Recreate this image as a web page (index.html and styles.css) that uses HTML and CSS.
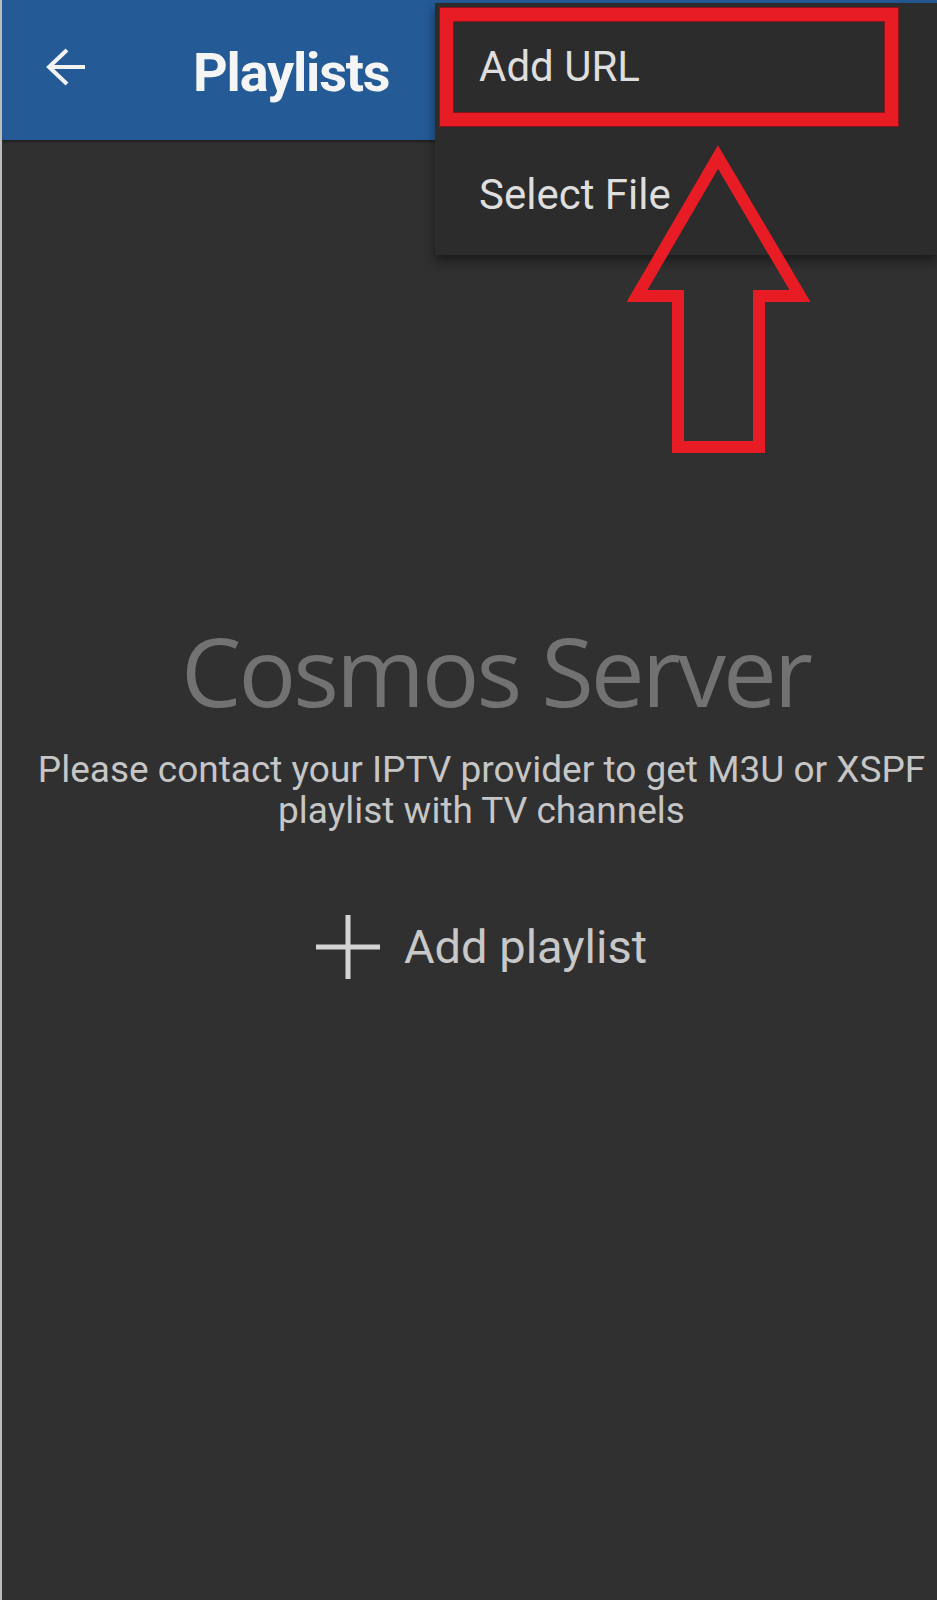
FILE: index.html
```html
<!DOCTYPE html>
<html>

<head>
	<meta http-equiv="Content-Type" content="text/html; charset=UTF-8">
	<meta name="viewport" content="width=device-width, initial-scale=1">
	<title>Playlists</title>
	<link rel="stylesheet" href="styles.css">
</head>

<body>
	<div id="screen">
		<div id="topbar">
			<svg class="back" width="41" height="40" viewBox="0 0 41 40">
				<path d="M3 20H39" />
				<path d="M21 3L3 20L21 37" />
			</svg>
			<div class="title">Playlists</div>
		</div>

		<!-- popup menu from the toolbar -->
		<div id="menu">
			<div class="menu_item marked">Add URL</div>
			<div class="menu_item">Select File</div>
		</div>

		<div id="empty">
			<div class="server">Cosmos Server</div>
			<p class="hint">Please contact your IPTV provider to get M3U or XSPF<br>playlist with TV channels</p>
			<div class="add_row">
				<svg class="plus" width="64" height="64" viewBox="0 0 64 64">
					<path d="M32 0V64M0 32H64" />
				</svg>
				<span>Add playlist</span>
			</div>
		</div>

		<!-- red callout arrow -->
		<svg class="callout" width="240" height="350" viewBox="600 120 240 350">
			<polygon points="718,157 637,296 678,296 678,447 759,447 759,296 800,296" />
		</svg>
	</div>
</body>

</html>
```

FILE: styles.css
```css
body {
	margin: 0;
	background: #303030;
	font-family: Roboto, "Liberation Sans", sans-serif;
}

#screen {
	position: relative;
	width: 935px;
	min-height: 1600px;
	border-left: 2px solid #bdbdbd;
	background: #303030;
	overflow: hidden;
}

#topbar {
	height: 140px;
	background: #245a96;
	box-shadow: 0 2px 2px rgba(0, 0, 0, 0.35);
	display: flex;
	align-items: center;
	padding-left: 44px;
	gap: 106px;
}

.back {
	margin-bottom: 6px;
	fill: none;
	stroke: #f2f2f2;
	stroke-width: 4;
}

.title {
	color: #f5f5f5;
	font-weight: 700;
	font-size: 54px;
	letter-spacing: -1.2px;
	padding-top: 4px;
}

#menu {
	position: absolute;
	top: 3px;
	left: 433px;
	right: 0;
	height: 252px;
	box-sizing: border-box;
	padding: 5px 39px 0 5px;
	background: #2c2c2c;
	box-shadow: 0 6px 10px rgba(0, 0, 0, 0.45);
}

.menu_item {
	color: #dedede;
	font-size: 42px;
	line-height: 92px;
	padding-left: 39px;
}

.menu_item.marked {
	border: 13px solid #e81c25;
	padding-left: 26px;
	box-shadow: 0 0 0 1px #8c1418, inset 0 0 0 1px #8c1418;
}

.menu_item + .menu_item {
	padding-top: 23px;
}

#empty {
	padding-left: 24px;
	text-align: center;
}

.server {
	margin-top: 482px;
	padding-left: 28px;
	font-family: "Open Sans", sans-serif;
	font-size: 96px;
	line-height: 96px;
	letter-spacing: -3px;
	color: #727272;
}

.hint {
	margin: 31px 0 0 0;
	font-size: 37px;
	line-height: 41px;
	color: #c6c6c6;
}

.add_row {
	margin-top: 84px;
	display: flex;
	justify-content: center;
	align-items: center;
	gap: 24px;
	height: 64px;
	color: #c8c8c8;
	font-size: 47px;
	line-height: 64px;
}

.plus {
	stroke: #d4d4d4;
	stroke-width: 5;
}

.callout {
	position: absolute;
	left: 598px;
	top: 120px;
	fill: none;
	stroke: #e81c25;
	stroke-width: 12;
	stroke-linejoin: miter;
}
```
